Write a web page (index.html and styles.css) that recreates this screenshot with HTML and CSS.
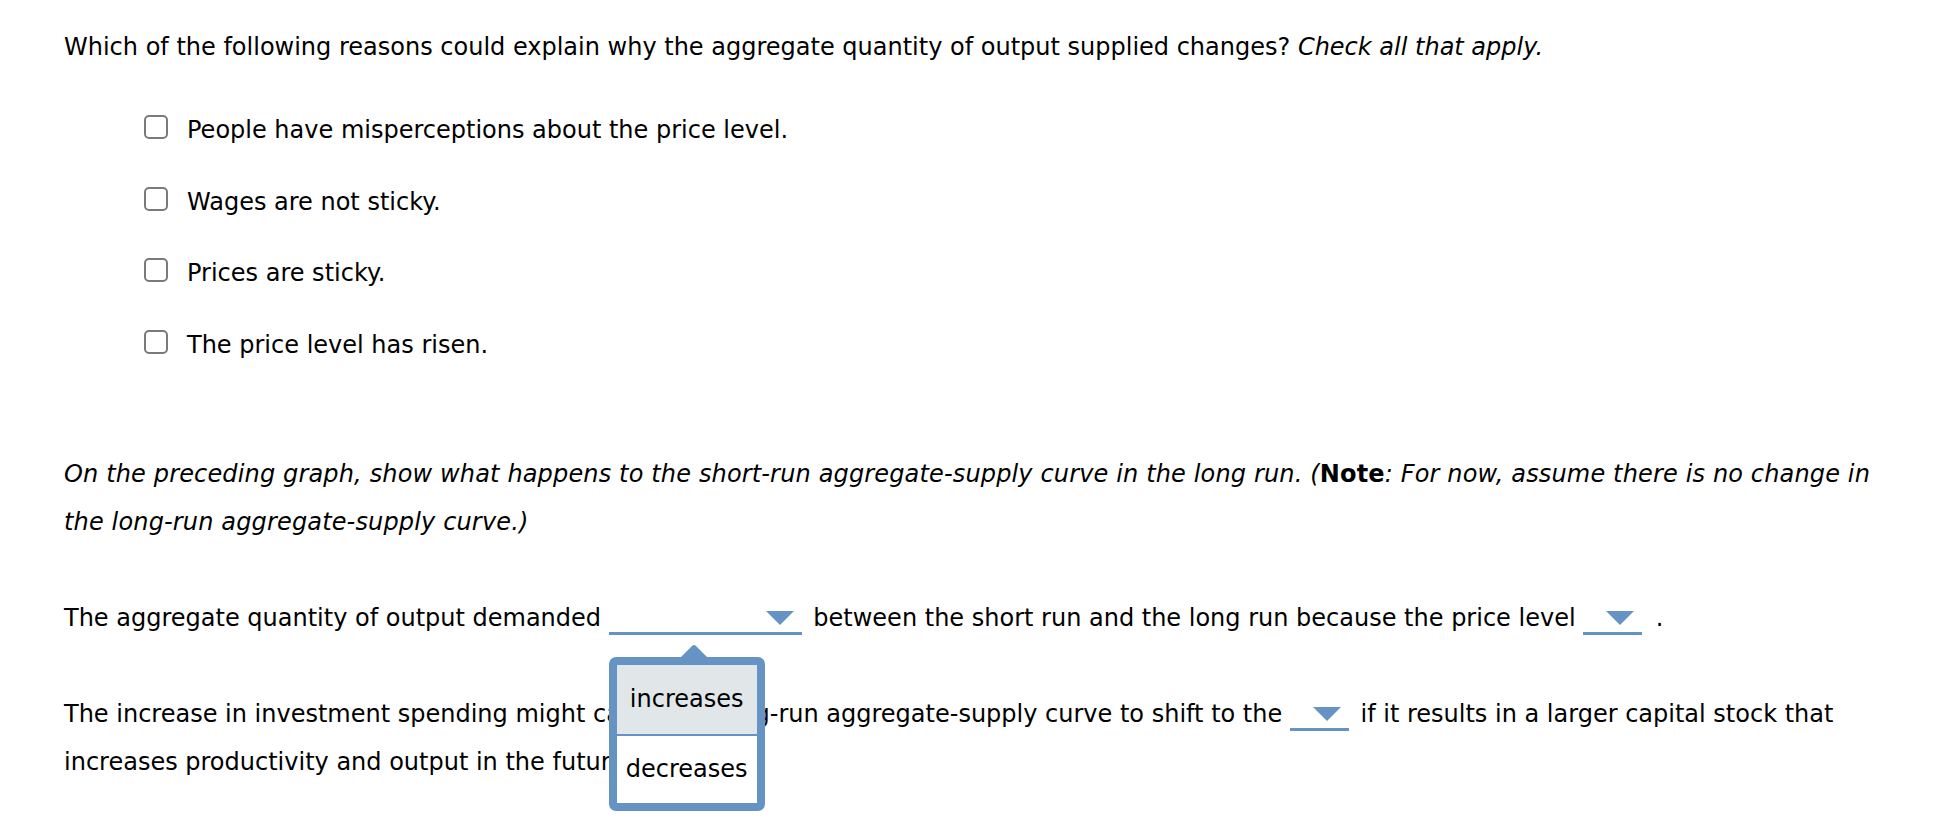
FILE: index.html
```html
<!DOCTYPE html>
<html>
<head>
<meta charset="utf-8">
<link rel="stylesheet" href="styles.css">
</head>
<body>
<div class="page">
  <p class="para">Which of the following reasons could explain why the aggregate quantity of output supplied changes? <em>Check all that apply.</em></p>
  <ul class="choices">
    <li class="choice"><span class="box"></span><span>People have misperceptions about the price level.</span></li>
    <li class="choice"><span class="box"></span><span>Wages are not sticky.</span></li>
    <li class="choice"><span class="box"></span><span>Prices are sticky.</span></li>
    <li class="choice"><span class="box"></span><span>The price level has risen.</span></li>
  </ul>
  <p class="para note">On the preceding graph, show what happens to the short-run aggregate-supply curve in the long run. (<strong>Note</strong>: For now, assume there is no change in the long-run aggregate-supply curve.)</p>
  <p class="para gap">The aggregate quantity of output demanded <span class="dd dd-wide"><svg class="tri" width="28" height="14" viewBox="0 0 28 14"><polygon points="0,0 28,0 14,14"/></svg><span class="popup"><svg class="arrow" width="30" height="15" viewBox="0 0 30 15"><path d="M1 15 L13 3 Q15 1 17 3 L29 15 Z"/></svg><span class="opt opt-hi">increases</span><span class="opt">decreases</span></span></span> between the short run and the long run because the price level <span class="dd"><svg class="tri" width="28" height="14" viewBox="0 0 28 14"><polygon points="0,0 28,0 14,14"/></svg></span> <span class="dot">.</span></p>
  <p class="para gap">The increase in investment spending might cause the long-run aggregate-supply curve to shift to the <span class="dd"><svg class="tri" width="28" height="14" viewBox="0 0 28 14"><polygon points="0,0 28,0 14,14"/></svg></span> if it results in a larger capital stock that increases productivity and output in the future.</p>
</div>
</body>
</html>
```

FILE: styles.css
```css
html, body {
  margin: 0;
  padding: 0;
  background: #ffffff;
  min-height: 826px;
}
.page {
  padding: 23px 60px 0 64px;
  min-height: 826px;
  box-sizing: border-box;
  font-family: "DejaVu Sans", Verdana, sans-serif;
  font-size: 24px;
  color: #000;
}
.para {
  margin: 0;
  line-height: 48px;
}
.choices {
  list-style: none;
  margin: 45px 0 0 0;
  padding: 0 0 0 80px;
  display: flex;
  flex-direction: column;
  gap: 43.5px;
}
.choice {
  display: flex;
  align-items: flex-start;
  gap: 19px;
  line-height: 28px;
}
.box {
  width: 20px;
  height: 20px;
  border: 2px solid #7a7a7a;
  border-radius: 5px;
  margin-top: -1px;
  flex: none;
}
.note {
  font-style: italic;
  letter-spacing: 0.15px;
  margin-top: 91px;
}
.note strong {
  font-style: normal;
  font-weight: bold;
}
.gap {
  margin-top: 48px;
}
.dd {
  position: relative;
  display: inline-flex;
  justify-content: flex-end;
  align-items: flex-start;
  box-sizing: border-box;
  width: 59px;
  height: 28px;
  padding: 4px 8px 0 0;
  border-bottom: 3px solid #6593c4;
  vertical-align: 1px;
  margin: 0 4px 0 0;
}
.dd-wide {
  width: 193px;
}
.dot {
  margin-left: 2px;
}
.tri {
  display: block;
  fill: #6593c4;
}
.popup {
  position: absolute;
  left: 0;
  top: 50px;
  width: 156px;
  box-sizing: border-box;
  border: 8px solid #6593c4;
  border-radius: 7px;
  background: #fff;
  display: flex;
  flex-direction: column;
  z-index: 2;
}
.arrow {
  position: absolute;
  left: 62px;
  top: -22px;
  fill: #6593c4;
}
.opt {
  display: flex;
  align-items: center;
  justify-content: center;
  height: 67px;
  line-height: 28px;
  background: #fff;
  flex: none;
}
.opt-hi {
  height: 71px;
  box-sizing: border-box;
  background: #e1e7e9;
  border-bottom: 2px solid #6593c4;
}
```
